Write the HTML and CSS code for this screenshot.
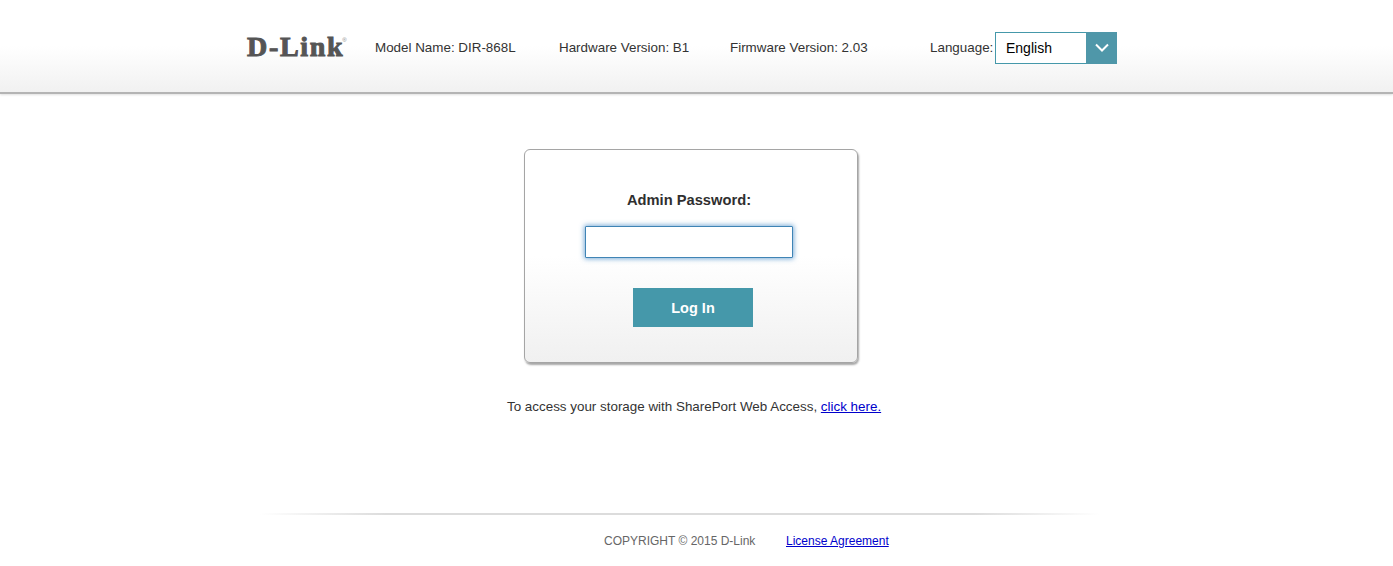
FILE: index.html
```html
<!DOCTYPE html>
<html lang="en">
<head>
<meta charset="utf-8">
<title>D-Link</title>
<link rel="stylesheet" href="styles.css">
</head>
<body>
<header class="header">
  <div class="header-inner">
    <div class="logo">D-Link<sup class="reg">®</sup></div>
    <span class="info model">Model Name: DIR-868L</span>
    <span class="info hardware">Hardware Version: B1</span>
    <span class="info firmware">Firmware Version: 2.03</span>
    <span class="info language">Language:</span>
    <div class="select">
      <span class="select-value">English</span>
      <span class="select-arrow">
        <svg width="14" height="9" viewBox="0 0 14 9"><path d="M1 1.5 L7 7.5 L13 1.5" fill="none" stroke="#fff" stroke-width="2"/></svg>
      </span>
    </div>
  </div>
</header>
<main class="main">
  <section class="card">
    <div class="card-label">Admin Password:</div>
    <input class="password" type="password" aria-label="Admin Password">
    <button class="login" type="button">Log In</button>
  </section>
  <p class="storage">To access your storage with SharePort Web Access, <a href="#">click here.</a></p>
</main>
<footer class="footer">
  <div class="rule"></div>
  <div class="footer-text">
    <span class="copyright">COPYRIGHT © 2015 D-Link</span>
    <a href="#" class="license">License Agreement</a>
  </div>
</footer>
</body>
</html>
```

FILE: styles.css
```css
* { box-sizing: border-box; }
html, body { margin: 0; padding: 0; }
body {
  width: 1393px;
  height: 566px;
  overflow: hidden;
  background: #fff;
  font-family: "Liberation Sans", Arial, sans-serif;
  color: #333;
}
.header {
  height: 94px;
  background: linear-gradient(to bottom, #fff 0%, #fff 50%, #f1f1f1 100%);
  border-bottom: 2px solid #b4b4b4;
  box-shadow: 0 1px 2px rgba(0,0,0,.12);
}
.header-inner {
  display: flex;
  align-items: center;
  height: 92px;
  padding: 2px 0 0 247px;
}
.logo {
  width: 128px;
  font-family: "Liberation Serif", serif;
  font-weight: 700;
  font-size: 28px;
  line-height: 28px;
  color: #555;
  -webkit-text-stroke: 1px #555;
  letter-spacing: 1.7px;
  white-space: nowrap;
}
.reg {
  font-size: 6px;
  font-family: "Liberation Sans", sans-serif;
  font-weight: 400;
  -webkit-text-stroke: 0;
  color: #888;
  vertical-align: 14px;
  line-height: 0;
  letter-spacing: 0;
  margin-left: -2px;
}
.info {
  font-size: 13.4px;
  line-height: 18px;
  color: #333;
  white-space: nowrap;
  margin-top: 1px;
}
.model { width: 184px; }
.hardware { width: 171px; }
.firmware { width: 200px; }
.language { width: 65px; }
.select {
  display: flex;
  width: 122px;
  height: 32px;
  margin-top: 1px;
  background: #fff;
  border: 1px solid #4598aa;
}
.select-value {
  flex: 1;
  padding-left: 10px;
  font-size: 14px;
  line-height: 30px;
  color: #000;
}
.select-arrow {
  display: flex;
  align-items: center;
  justify-content: center;
  width: 31px;
  margin: -1px -1px -1px 0;
  background: #4f97a9;
}
.main {
  display: flex;
  flex-direction: column;
  align-items: flex-start;
  padding: 55px 0 0 524px;
}
.card {
  display: flex;
  flex-direction: column;
  align-items: flex-start;
  width: 334px;
  height: 214px;
  padding: 41px 0 0 60px;
  border: 1px solid #a5a5a5;
  border-radius: 6px;
  background: linear-gradient(to bottom, #fff 0%, #fff 50%, #f0f0f0 100%);
  box-shadow: 1px 2px 2px rgba(0,0,0,.35);
}
.card-label {
  width: 208px;
  text-align: center;
  font-size: 14.7px;
  font-weight: 700;
  line-height: 18px;
  color: #2f2f2f;
}
.password {
  width: 208px;
  height: 32px;
  margin-top: 17px;
  padding: 0;
  background: #fff;
  border: 1px solid #3f84b5;
  border-radius: 1px;
  outline: none;
  box-shadow: 0 0 5px 1px rgba(70,140,200,.7);
}
.login {
  width: 120px;
  height: 39px;
  margin: 30px 0 0 48px;
  padding: 0;
  border: 0;
  background: #4598aa;
  color: #fff;
  font-family: inherit;
  font-size: 14.5px;
  font-weight: 700;
}
.storage {
  margin: 35px 0 0 -17px;
  font-size: 13.4px;
  line-height: 18px;
  color: #333;
  white-space: nowrap;
}
.storage a, .license { color: #00c; }
.footer {
  margin-top: 97px;
  padding-left: 260px;
}
.rule {
  width: 840px;
  height: 2px;
  background: linear-gradient(to right, rgba(220,220,220,0) 0%, #dcdcdc 15%, #dcdcdc 85%, rgba(220,220,220,0) 100%);
}
.footer-text {
  display: flex;
  padding: 18px 0 0 344px;
  font-size: 12px;
  line-height: 16px;
  white-space: nowrap;
}
.copyright { width: 182px; color: #666; }
```
